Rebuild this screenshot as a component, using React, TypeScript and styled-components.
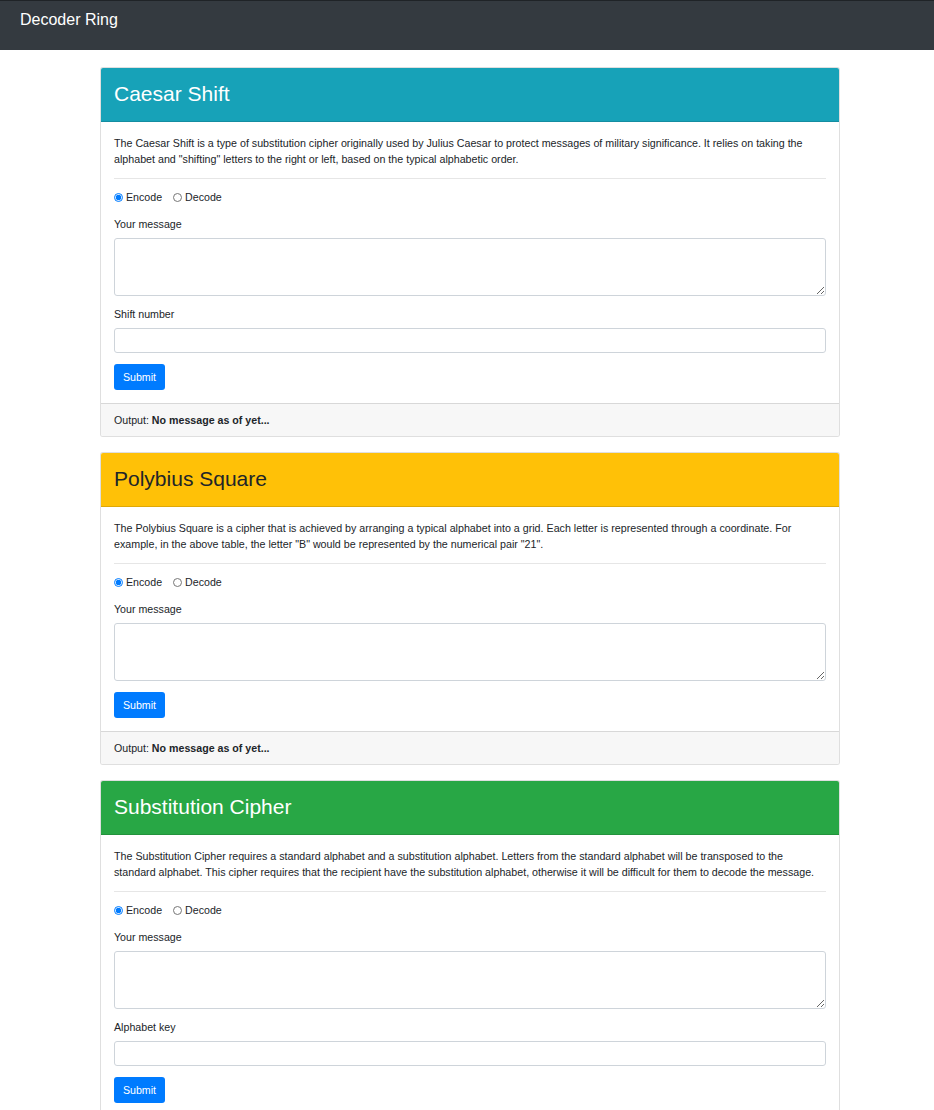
import styled, { createGlobalStyle } from "styled-components"

const GlobalStyle = createGlobalStyle`
  html, body {
    margin: 0;
    padding: 0;
    background: #fff;
    font-family: "Liberation Sans", Arial, sans-serif;
    color: #212529;
  }
  * { box-sizing: border-box; }
`

type Variant = "info" | "warning" | "success"

const headerColors: Record<Variant, { bg: string; fg: string }> = {
  info: { bg: "#17a2b8", fg: "#fff" },
  warning: { bg: "#ffc107", fg: "#212529" },
  success: { bg: "#28a745", fg: "#fff" },
}

interface Cipher {
  title: string
  variant: Variant
  description: string
  extraField?: string
  name: string
}

const ciphers: Cipher[] = [
  {
    title: "Caesar Shift",
    variant: "info",
    name: "caesar",
    description:
      'The Caesar Shift is a type of substitution cipher originally used by Julius Caesar to protect messages of military significance. It relies on taking the alphabet and "shifting" letters to the right or left, based on the typical alphabetic order.',
    extraField: "Shift number",
  },
  {
    title: "Polybius Square",
    variant: "warning",
    name: "polybius",
    description:
      'The Polybius Square is a cipher that is achieved by arranging a typical alphabet into a grid. Each letter is represented through a coordinate. For example, in the above table, the letter "B" would be represented by the numerical pair "21".',
  },
  {
    title: "Substitution Cipher",
    variant: "success",
    name: "substitution",
    description:
      "The Substitution Cipher requires a standard alphabet and a substitution alphabet. Letters from the standard alphabet will be transposed to the standard alphabet. This cipher requires that the recipient have the substitution alphabet, otherwise it will be difficult for them to decode the message.",
    extraField: "Alphabet key",
  },
]

const App: React.FC = () => {
  return (
    <>
      <GlobalStyle />
      <Navbar>
        <Brand>Decoder Ring</Brand>
      </Navbar>
      <Main>
        {ciphers.map(c => (
          <Card key={c.name}>
            <CardHeader $variant={c.variant}>
              <CardTitle>{c.title}</CardTitle>
            </CardHeader>
            <CardBody>
              <Description>{c.description}</Description>
              <Divider />
              <Form onSubmit={e => e.preventDefault()}>
                <RadioRow>
                  <RadioLabel>
                    <Radio type="radio" name={`${c.name}-mode`} defaultChecked />
                    Encode
                  </RadioLabel>
                  <RadioLabel>
                    <Radio type="radio" name={`${c.name}-mode`} />
                    Decode
                  </RadioLabel>
                </RadioRow>
                <Field>
                  <Label>Your message</Label>
                  <TextArea />
                </Field>
                {c.extraField && (
                  <Field>
                    <Label>{c.extraField}</Label>
                    <Input type="text" />
                  </Field>
                )}
                <Button type="submit">Submit</Button>
              </Form>
            </CardBody>
            <CardFooter>
              Output: <strong>No message as of yet...</strong>
            </CardFooter>
          </Card>
        ))}
      </Main>
    </>
  )
}

export default App

const Navbar = styled.nav`
  height: 50px;
  background: #343a40;
  border-top: 1px solid #1f2327;
  padding: 9px 20px 0;
`
const Brand = styled.div`
  color: #fff;
  font-size: 16px;
  line-height: 20px;
`
const Main = styled.main`
  padding: 17px 94px 17px 100px;
  display: flex;
  flex-direction: column;
  gap: 15px;
`
const Card = styled.section`
  width: 740px;
  border: 1px solid rgba(0, 0, 0, 0.125);
  border-radius: 3px;
  overflow: hidden;
  background: #fff;
`
const CardHeader = styled.header<{ $variant: Variant }>`
  height: 54px;
  padding: 0 13px 2px;
  display: flex;
  align-items: center;
  background: ${p => headerColors[p.$variant].bg};
  color: ${p => headerColors[p.$variant].fg};
  border-bottom: 1px solid rgba(0, 0, 0, 0.125);
`
const CardTitle = styled.h2`
  margin: 0;
  font-size: 21px;
  font-weight: 400;
  line-height: 1.2;
`
const CardBody = styled.div`
  padding: 13px 13px 13px;
`
const Description = styled.p`
  margin: 0;
  font-size: 10.7px;
  line-height: 16px;
`
const Divider = styled.hr`
  margin: 11px 0 11px;
  border: 0;
  border-top: 1px solid #e6e6e6;
`
const Form = styled.form`
  display: flex;
  flex-direction: column;
  align-items: flex-start;
  font-size: 10.65px;
`
const RadioRow = styled.div`
  display: flex;
  gap: 11px;
  height: 14px;
  align-items: center;
  margin-bottom: 13px;
`
const RadioLabel = styled.label`
  display: flex;
  align-items: center;
  gap: 3px;
  font-size: 10.65px;
`
const Radio = styled.input`
  margin: 0;
  width: 9px;
  height: 9px;
  accent-color: #007bff;
`
const Field = styled.div`
  width: 100%;
  display: flex;
  flex-direction: column;
  margin-bottom: 11px;
`
const Label = styled.label`
  font-size: 10.65px;
  line-height: 14px;
  margin-bottom: 7px;
`
const TextArea = styled.textarea`
  width: 100%;
  height: 58px;
  margin: 0;
  border: 1px solid #ced4da;
  border-radius: 3px;
  font-family: inherit;
  font-size: 10.65px;
  padding: 4px 8px;
  resize: vertical;
`
const Input = styled.input`
  width: 100%;
  height: 25px;
  margin: 0;
  border: 1px solid #ced4da;
  border-radius: 3px;
  font-family: inherit;
  font-size: 10.65px;
  padding: 4px 8px;
`
const Button = styled.button`
  height: 26px;
  width: 51px;
  padding: 0;
  border: none;
  border-radius: 3px;
  background: #007bff;
  color: #fff;
  font-family: inherit;
  font-size: 10.65px;
  cursor: pointer;
`
const CardFooter = styled.footer`
  height: 33px;
  padding: 0 13px;
  display: flex;
  align-items: center;
  background: #f7f7f7;
  border-top: 1px solid rgba(0, 0, 0, 0.125);
  font-size: 10.65px;
  white-space: pre;
`
